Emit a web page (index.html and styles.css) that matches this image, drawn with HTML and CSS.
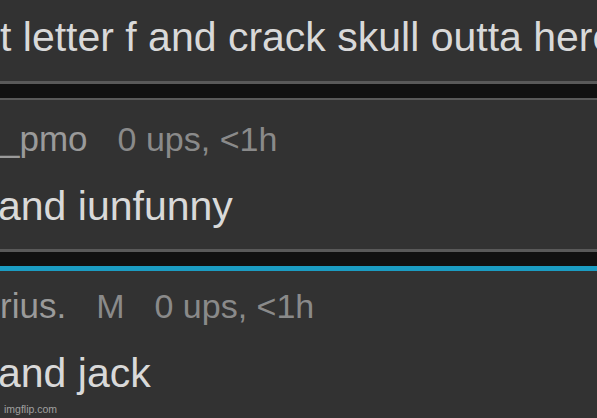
FILE: index.html
```html
<!DOCTYPE html>
<html>
<head>
<meta charset="utf-8">
<link rel="stylesheet" href="styles.css">
</head>
<body>
<div class="page">
  <div class="comment comment-first">
    <p class="text">t letter f and crack skull outta here</p>
  </div>
  <div class="divider"></div>
  <div class="comment comment-boxed">
    <div class="meta">
      <span class="user">_pmo</span>
      <span class="stats">0 ups, &lt;1h</span>
    </div>
    <p class="text text-cut">and iunfunny</p>
  </div>
  <div class="divider"></div>
  <div class="comment comment-new">
    <div class="meta">
      <span class="user">rius.</span>
      <span class="badge">M</span>
      <span class="stats">0 ups, &lt;1h</span>
    </div>
    <p class="text text-cut">and jack</p>
  </div>
  <div class="watermark">imgflip.com</div>
</div>
</body>
</html>
```
FILE: styles.css
```css
html, body {
  margin: 0;
  padding: 0;
  background: #323232;
}
.page {
  position: relative;
  width: 597px;
  height: 418px;
  overflow: hidden;
  background: #323232;
  font-family: "Liberation Sans", Arial, sans-serif;
}
.comment {
  background: #323232;
}
.comment-first {
  padding: 12.5px 0 20.5px 0;
  border-bottom: 3px solid #595959;
}
.comment-boxed {
  padding: 18.5px 0 19px 0;
  border-top: 2px solid #595959;
  border-bottom: 3px solid #595959;
}
.comment-new {
  padding: 15.5px 0 0 0;
  border-top: 5px solid #1b9cc2;
}
.divider {
  height: 14px;
  background: #111111;
}
.text {
  margin: 0;
  font-size: 41px;
  line-height: 48px;
  color: #d9d9d9;
  white-space: nowrap;
}
.text-cut {
  text-indent: -2px;
}
.meta {
  display: flex;
  align-items: baseline;
  gap: 30px;
  height: 40px;
  line-height: 40px;
  margin-bottom: 23px;
  white-space: nowrap;
}
.user {
  font-size: 35px;
  color: #9a9a9a;
}
.badge {
  font-size: 34px;
  color: #8a8a8a;
}
.stats {
  font-size: 34px;
  color: #8a8a8a;
}
.watermark {
  position: absolute;
  left: 4px;
  bottom: 3px;
  font-size: 10.5px;
  line-height: 12px;
  color: #a0a0a0;
}
```
